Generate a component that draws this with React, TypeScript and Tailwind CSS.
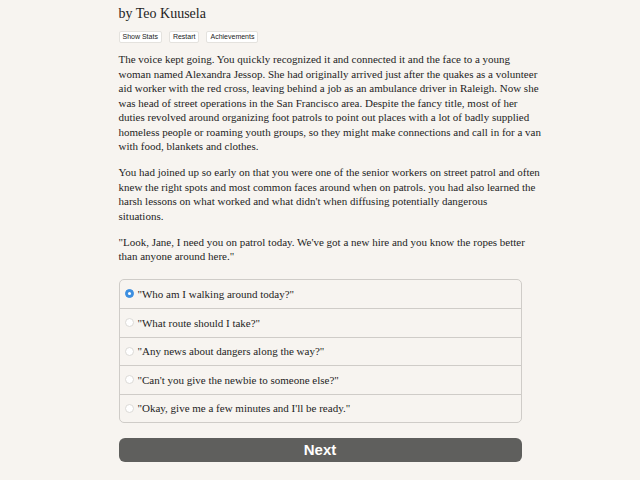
import { useState } from "react";

const serif = { fontFamily: '"Liberation Serif", "Times New Roman", serif' };
const sans = { fontFamily: '"Liberation Sans", Arial, sans-serif' };

// wrapped by hand so the lines break where the game's column breaks them
const story: string[][] = [
  [
    "The voice kept going. You quickly recognized it and connected it and the face to a young",
    "woman named Alexandra Jessop. She had originally arrived just after the quakes as a volunteer",
    "aid worker with the red cross, leaving behind a job as an ambulance driver in Raleigh. Now she",
    "was head of street operations in the San Francisco area. Despite the fancy title, most of her",
    "duties revolved around organizing foot patrols to point out places with a lot of badly supplied",
    "homeless people or roaming youth groups, so they might make connections and call in for a van",
    "with food, blankets and clothes.",
  ],
  [
    "You had joined up so early on that you were one of the senior workers on street patrol and often",
    "knew the right spots and most common faces around when on patrols. you had also learned the",
    "harsh lessons on what worked and what didn't when diffusing potentially dangerous",
    "situations.",
  ],
  [
    "\"Look, Jane, I need you on patrol today. We've got a new hire and you know the ropes better",
    "than anyone around here.\"",
  ],
];

const choices = [
  "\"Who am I walking around today?\"",
  "\"What route should I take?\"",
  "\"Any news about dangers along the way?\"",
  "\"Can't you give the newbie to someone else?\"",
  "\"Okay, give me a few minutes and I'll be ready.\"",
];

const App = () => {
  const [picked, setPicked] = useState(0);

  return (
    <div className="min-h-[480px] w-full bg-[#f7f4f0] text-[#222]">
      <div className="mx-auto w-[403px] pt-[5px]">
        <h2 className="text-[14px] leading-[17px] text-[#1e1e1e]" style={serif}>
          by Teo Kuusela
        </h2>

        <div className="mt-[9px] flex gap-[7px]" style={sans}>
          <button className="rounded-[2px] border border-[#e4e2de] bg-white px-[3px] text-[7px] leading-[10px] text-[#222]">
            Show Stats
          </button>
          <button className="rounded-[2px] border border-[#e4e2de] bg-white px-[3px] text-[7px] leading-[10px] text-[#222]">
            Restart
          </button>
          <button className="rounded-[2px] border border-[#e4e2de] bg-white px-[3px] text-[7px] leading-[10px] text-[#222]">
            Achievements
          </button>
        </div>

        <div className="mt-[9px] flex flex-col gap-[11.5px] text-[11px] leading-[14.5px] text-[#1e1e1e]" style={serif}>
          {story.map((para, i) => (
            <p key={i} className="whitespace-nowrap">
              {para.map((line, j) => (
                <span key={j} className="block">
                  {line}
                </span>
              ))}
            </p>
          ))}
        </div>

        <div className="mt-[15px] overflow-hidden rounded-[5px] border border-[#cfccc8] bg-[#f7f4f0]">
          {choices.map((c, i) => (
            <label
              key={i}
              className={`flex h-[28.5px] cursor-pointer items-center gap-[4px] pl-[5px] ${i > 0 ? "border-t border-[#cfccc8]" : ""}`}
              onClick={() => setPicked(i)}
            >
              <span
                className={`flex h-[9px] w-[9px] items-center justify-center rounded-full border ${
                  picked === i ? "border-[#3d8fe0] bg-[#3d8fe0]" : "border-[#dcdad6] bg-white"
                }`}
              >
                {picked === i && <span className="h-[3px] w-[3px] rounded-full bg-white" />}
              </span>
              <span className="text-[11px] text-[#1e1e1e]" style={serif}>
                {c}
              </span>
            </label>
          ))}
        </div>

        <button
          className="mt-[15px] h-[24px] w-full rounded-[6px] bg-[#5f5f5d] text-[15px] font-bold text-white"
          style={sans}
        >
          Next
        </button>
      </div>
    </div>
  );
};

export default App;
